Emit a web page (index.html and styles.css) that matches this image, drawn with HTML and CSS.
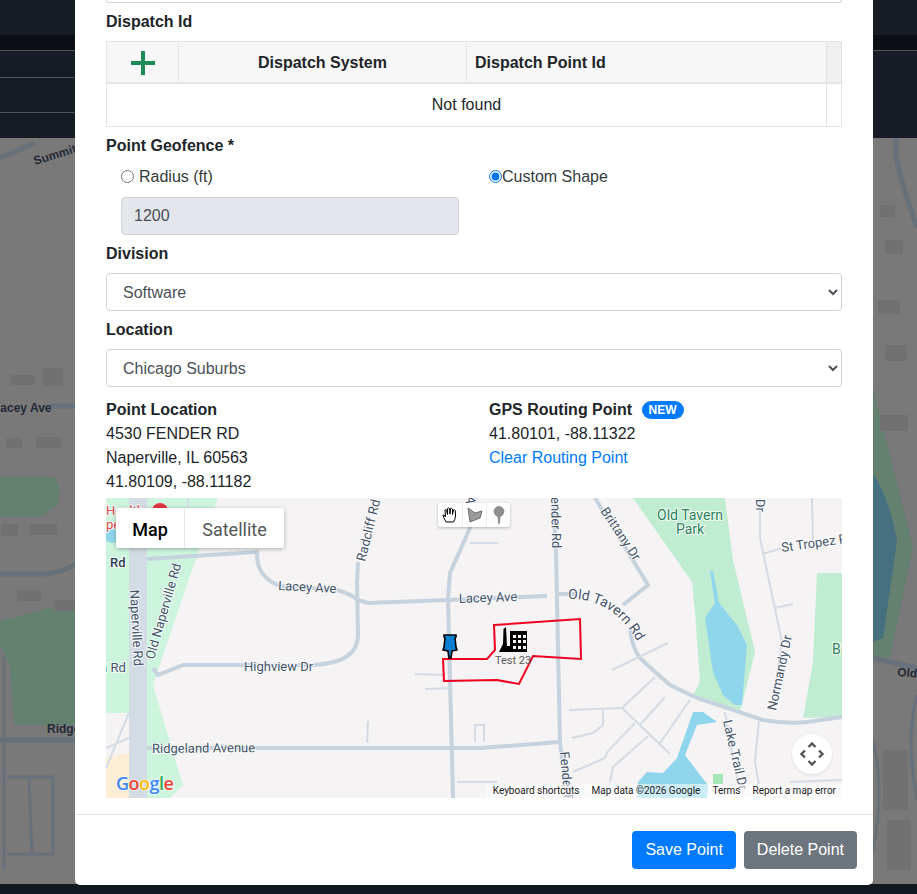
FILE: index.html
```html
<!DOCTYPE html>
<html>
<head>
    <meta charset="UTF-8">
    <title>Edit Point</title>
    <link rel="stylesheet" href="styles.css">
</head>
<body>
    <!-- page behind the modal, already dimmed -->
    <svg class="backdrop" width="917" height="894" viewBox="0 0 917 894">
        <rect width="917" height="894" fill="#7a797a"/>
        <rect width="917" height="35" fill="#171b24"/>
        <rect y="35" width="917" height="15" fill="#0c0f13"/>
        <rect y="50" width="917" height="88" fill="#161b25"/>
        <path d="M0 50.5H917M0 77.5H75M0 112.5H75" stroke="#50545b" fill="none"/>
        <rect y="884" width="917" height="10" fill="#13171f"/>
        <g fill="#64806f">
            <path d="M0 477H55Q62 490 58 505L40 517H0Z"/>
            <path d="M0 621L75 601V725H14L10 665L0 645Z"/>
            <path d="M873 388L913 547L890 658L873 655Z"/>
        </g>
        <path d="M873 473Q890 500 897 541L883 638L873 642Z" fill="#466f80"/>
        <g fill="none" stroke="#66717b" stroke-width="5">
            <path d="M0 158L35 143M50 406H75"/>
            <path d="M0 574H45Q65 572 75 564"/>
            <path d="M0 740H75"/>
            <path d="M873 658L917 668"/>
            <path d="M896 138V155Q900 180 917 228"/>
            <path d="M4 656V869M7 777H53V854H7M29 777L32 854" stroke-width="3"/>
            <path d="M873 740Q885 790 873 850M917 695Q905 740 917 800" stroke-width="3"/>
        </g>
        <g fill="#727172">
            <rect x="11" y="375" width="24" height="10"/>
            <rect x="43" y="368" width="20" height="18"/>
            <rect x="6" y="438" width="16" height="10"/>
            <rect x="36" y="437" width="25" height="11"/>
            <rect x="1" y="524" width="17" height="12"/>
            <rect x="29" y="524" width="28" height="11"/>
            <rect x="17" y="590" width="24" height="11"/>
            <rect x="54" y="600" width="21" height="11"/>
            <rect x="880" y="205" width="15" height="12"/>
            <rect x="885" y="240" width="18" height="14"/>
            <rect x="878" y="300" width="22" height="14"/>
            <rect x="885" y="345" width="22" height="16"/>
            <rect x="880" y="415" width="28" height="16"/>
            <rect x="883" y="750" width="25" height="60"/>
            <rect x="887" y="820" width="24" height="50"/>
        </g>
        <g class="bg-label">
            <text x="35" y="165" transform="rotate(-17 35 165)">Summit</text>
            <text x="-7" y="412">Lacey Ave</text>
            <text x="47" y="733">Ridgeland</text>
            <text x="897" y="676" transform="rotate(5 897 676)">Old</text>
        </g>
    </svg>

    <div class="modal">
        <div class="modal-body">
            <div class="prev-input"></div>

            <label class="field-label">Dispatch Id</label>
            <table class="dispatch-table">
                <thead>
                    <tr>
                        <th class="col-add">
                            <svg width="24" height="24" viewBox="0 0 24 24"><path d="M10 0h4v10h10v4H14v10h-4V14H0v-4h10z" fill="#1f8b58"/></svg>
                        </th>
                        <th class="col-system">Dispatch System</th>
                        <th class="col-point">Dispatch Point Id</th>
                        <th class="col-gutter"></th>
                    </tr>
                </thead>
                <tbody>
                    <tr>
                        <td colspan="3">Not found</td>
                        <td class="cell-gutter"></td>
                    </tr>
                </tbody>
            </table>

            <label class="field-label geofence-label">Point Geofence *</label>
            <div class="geofence-row">
                <div class="radius-col">
                    <label class="radio-label"><input type="radio" name="fence">Radius (ft)</label>
                    <input class="form-control" type="text" value="1200" disabled>
                </div>
                <div class="shape-col">
                    <label class="radio-label radio-tight"><input type="radio" name="fence" checked>Custom Shape</label>
                </div>
            </div>

            <label class="field-label select-label">Division</label>
            <select class="form-control">
                <option>Software</option>
            </select>

            <label class="field-label select-label">Location</label>
            <select class="form-control">
                <option>Chicago Suburbs</option>
            </select>

            <div class="location-row">
                <div>
                    <div class="strong">Point Location</div>
                    <div>4530 FENDER RD</div>
                    <div>Naperville, IL 60563</div>
                    <div>41.80109, -88.11182</div>
                </div>
                <div>
                    <div class="strong">GPS Routing Point <span class="badge">NEW</span></div>
                    <div>41.80101, -88.11322</div>
                    <a href="#">Clear Routing Point</a>
                </div>
            </div>

            <div class="map">
                <svg class="map-canvas" width="736" height="300" viewBox="0 0 736 300">
                    <rect width="736" height="300" fill="#f5f3f4"/>
                    <!-- parks and water -->
                    <g fill="#cdf5de">
                        <path d="M41 0H112L86 72L47 187L77 287L64 300H41Z"/>
                        <rect width="23" height="215"/>
                    </g>
                    <path d="M0 260L23 255V300H0Z" fill="#fbeed5"/>
                    <g fill="#c0edd1">
                        <path d="M527 0H619L627 62L649 154L634 214L587 197L594 184L589 114L586 84Z"/>
                        <path d="M711 75H736V219L697 220L707 164Z"/>
                    </g>
                    <rect x="607" y="276" width="10" height="10" fill="#a5e6b8"/>
                    <g fill="#8fd5ec">
                        <path d="M604 73H607L613 105L631 127L641 147L636 207L629 207L617 197L607 174L599 120L609 105Z"/>
                        <path d="M587 214L597 214L611 224L591 227L579 257L594 277L602 287L601 300H531L532 284L541 274L557 275L571 260Z"/>
                        <circle cx="6" cy="38" r="7"/>
                    </g>
                    <!-- roads -->
                    <rect x="23" width="18" height="300" fill="#d3dbe4"/>
                    <g class="road">
                        <path d="M41 61L151 54Q150 80 175 88L231 92Q245 96 252 102L262 105L342 102L441 98M452 96H470"/>
                        <path d="M252 64L251 84L252 137Q252 165 207 167H77L52 177L47 170"/>
                        <path d="M41 250H374L454 244"/>
                        <path d="M369 0L364 30L344 75L342 102L347 300"/>
                        <path d="M447 0L450 54L454 244L461 300"/>
                        <path d="M489 0L542 87L517 107"/>
                        <path d="M524 130Q526 150 534 160Q550 175 564 187L591 200L657 222Q680 226 701 224L736 219"/>
                    </g>
                    <g class="road-thin">
                        <path d="M0 270L23 215M0 250L23 240M309 176L339 177M319 191L345 190M262 223L261 245M82 0L79 47"/>
                        <path d="M364 45H392M351 284H391M369 244V227H378V243"/>
                        <path d="M463 212L516 210L564 256M516 210L549 179M534 227L559 199M554 245L584 202"/>
                        <path d="M497 212V227L487 235L466 240M542 238L507 269M529 225L501 254L499 260L467 274M507 269L504 284"/>
                        <path d="M506 172L562 145M684 284L736 282M654 0L654 40L676 144M657 56L676 50M706 0L707 42M669 110L687 106"/>
                        <path d="M619 214L632 287M653 222L649 264L653 287"/>
                        <path d="M666 212L676 144"/>
                    </g>
                    <!-- map labels -->
                    <g class="map-label">
                        <text x="172" y="92" transform="rotate(3 172 92)">Lacey Ave</text>
                        <text x="353" y="105" transform="rotate(-2 353 105)">Lacey Ave</text>
                        <text x="138" y="173">Highview Dr</text>
                        <text x="46" y="255" transform="rotate(-.5 46 255)">Ridgeland Avenue</text>
                        <text x="24" y="92" transform="rotate(87 24 92)">Naperville Rd</text>
                        <text x="48" y="162" transform="rotate(-74 48 162)">Old Naperville Rd</text>
                        <text x="259" y="64" transform="rotate(-76 259 64)">Radcliff Rd</text>
                        <text x="494" y="13" transform="rotate(56 494 13)">Brittany Dr</text>
                        <text x="445" y="-8" transform="rotate(89 445 -8)">Fender Rd</text>
                        <text x="454" y="254" transform="rotate(85 454 254)">Fender Rd</text>
                        <text x="676" y="54" transform="rotate(-8 676 54)">St Tropez Pl</text>
                        <text x="670" y="213" transform="rotate(-78 670 213)">Normandy Dr</text>
                        <text x="617" y="223" transform="rotate(77 617 223)">Lake Trail Dr</text>
                        <text x="650" y="1" transform="rotate(90 650 1)">Dr</text>
                        <text x="361" y="-3" transform="rotate(100 361 -3)">Ar</text>
                        <text x="4" y="69" class="label-dark">Rd</text>
                        <text x="-6" y="174">n Rd</text>
                        <text class="curved"><textPath href="#old-tavern">Old Tavern Rd</textPath></text>
                        <text x="584" y="22" text-anchor="middle" class="label-park">Old Tavern</text>
                        <text x="584" y="36" text-anchor="middle" class="label-park">Park</text>
                        <text x="726" y="156" class="label-park">Bi</text>
                        <text x="0" y="17" class="label-red">Health</text>
                        <text x="0" y="31" class="label-red">pe</text>
                    </g>
                    <defs><path id="old-tavern" d="M462 101Q505 100 530 141"/></defs>
                    <circle cx="54" cy="13" r="8" fill="#e0383e"/>
                    <!-- geofence -->
                    <path d="M388 127L474 121L475 161L427 158L413 186L391 182L338 183L337 161L381 161L389 152Z" fill="none" stroke="#f00020" stroke-width="2"/>
                    <!-- factory marker -->
                    <path d="M393 154L397 146L397.500 131L400 129L401 148L404 148V133H421V154Z" fill="#000"/>
                    <g fill="#fff">
                        <rect x="407" y="137" width="3" height="3"/><rect x="412" y="137" width="3" height="3"/><rect x="417" y="137" width="3" height="3"/>
                        <rect x="407" y="142" width="3" height="3"/><rect x="412" y="142" width="3" height="3"/><rect x="417" y="142" width="3" height="3"/>
                        <rect x="407" y="148" width="3" height="3"/><rect x="412" y="148" width="3" height="3"/><rect x="417" y="148" width="3" height="3"/>
                    </g>
                    <text x="389" y="166" class="marker-label">Test 23</text>
                    <!-- dispatch pin -->
                    <path d="M338 137H350V139L349 140L350 149L351 152L346 153L345 160H343L342 153L337 152L338 149L339 140L338 139Z" fill="#0a80d2" stroke="#000" stroke-width="1.600"/>
                    <!-- logo -->
                    <text x="10" y="292" class="g-logo"><tspan fill="#4285f4">G</tspan><tspan fill="#ea4335">o</tspan><tspan fill="#fbbc05">o</tspan><tspan fill="#4285f4">g</tspan><tspan fill="#34a853">l</tspan><tspan fill="#ea4335">e</tspan></text>
                </svg>

                <div class="map-type">
                    <div class="map-type-btn active">Map</div>
                    <div class="map-type-btn">Satellite</div>
                </div>

                <div class="draw-tools">
                    <div class="draw-btn">
                        <svg width="16" height="18" viewBox="0 0 16 18"><path d="M4 16L1 10Q.5 8.500 2 9L3.500 11L3 4Q3.500 3 4.500 4L5.500 8.500L5.500 2.500Q6.500 1.500 7.500 2.500L8 8L8.500 2.500Q9.500 1.500 10.500 3L10.500 8.500L11.500 4Q12.500 3 13.300 4.500L13.500 10Q13 14 11.500 16Z" fill="#fff" stroke="#000" stroke-width="1"/></svg>
                    </div>
                    <div class="draw-btn">
                        <svg width="16" height="16" viewBox="0 0 16 16"><path d="M1 1L8 6L15 4L13 11L3 15Z" fill="#9a9a9a" stroke="#6e6e6e"/></svg>
                    </div>
                    <div class="draw-btn">
                        <svg width="12" height="18" viewBox="0 0 12 18"><path d="M6 0.500A5 5 0 0 1 11 5.500Q11 8.500 7 11L6.500 17.500H5.500L5 11Q1 8.500 1 5.500A5 5 0 0 1 6 0.500Z" fill="#8e8e8e" stroke="#777" stroke-width=".6"/></svg>
                    </div>
                </div>

                <div class="pan-btn">
                    <svg width="24" height="24" viewBox="0 0 24 24"><path d="M8.500 5L12 1.500L15.500 5M8.500 19L12 22.500L15.500 19M5 8.500L1.500 12L5 15.500M19 8.500L22.500 12L19 15.500" fill="none" stroke="#555" stroke-width="2.400"/></svg>
                </div>

                <div class="attribution">
                    <span>Keyboard shortcuts</span>
                    <span>Map data ©2026 Google</span>
                    <span>Terms</span>
                    <span>Report a map error</span>
                </div>
            </div>
        </div>

        <div class="modal-footer">
            <button class="btn btn-primary">Save Point</button>
            <button class="btn btn-secondary">Delete Point</button>
        </div>
    </div>
</body>
</html>
```

FILE: styles.css
```css
body { margin: 0; width: 917px; height: 894px; overflow: hidden; background: #13171f; font-family: "Liberation Sans", Arial, sans-serif; font-size: 16px; line-height: 24px; color: #212529; }
.backdrop { position: absolute; left: 0; top: 0; }
.bg-label { font-family: "Liberation Sans", sans-serif; font-weight: bold; font-size: 12px; fill: #232a36; }

.modal { position: absolute; left: 75px; top: 0; width: 798px; height: 885px; background: #fff; border-radius: 0 0 5px 5px; box-sizing: border-box; }
.modal-body { height: 814px; padding: 0 31px; box-sizing: border-box; }
.prev-input { height: 2px; border: 1px solid #ced4da; border-top: none; border-radius: 0 0 4px 4px; margin-bottom: 7px; }
.field-label { display: block; font-weight: bold; margin-bottom: 7px; }
.geofence-label { margin: 7px 0 7px; }
.select-label { margin: 7px 0 7px; }

.dispatch-table { width: 736px; height: 86px; border-collapse: collapse; table-layout: fixed; border: 1px solid #e4e4e4; }
.dispatch-table th { background: #f7f7f7; border: 1px solid #e4e4e4; border-bottom-width: 2px; height: 41px; padding: 2px 8px 0; box-sizing: border-box; vertical-align: middle; }
.dispatch-table td { text-align: center; padding: 0; height: 42px; }
.col-add { width: 72px; }
.col-add svg { display: block; margin: 0 auto; }
.col-system { width: 288px; }
.col-point { width: 360px; text-align: left; }
.col-gutter { background: #efefef !important; }
.dispatch-table .cell-gutter { border-left: 1px solid #e4e4e4; width: 15px; }

.geofence-row { display: flex; padding-left: 15px; }
.radius-col { width: 338px; margin-right: 30px; }
.shape-col { flex: 1; }
.radio-label { display: flex; align-items: center; height: 24px; margin-bottom: 8px; color: #343a40; }
.radio-label input { width: 13px; height: 13px; margin: 0 5px 1px 0; }
.radio-tight input { margin-right: 0; }
.form-control { display: block; width: 100%; height: 38px; padding: 6px 12px; box-sizing: border-box; border: 1px solid #ced4da; border-radius: 4px; background: #fff; font: inherit; color: #495057; }
.form-control:disabled { background: #e3e6ea; opacity: 1; }

.location-row { display: grid; grid-template-columns: 383px 1fr; margin-top: 10px; padding-top: 1px; height: 100px; }
.strong { font-weight: bold; }
.badge { display: inline-block; margin-left: 5px; padding: 0 7px; height: 18px; line-height: 18px; border-radius: 9px; background: #007bff; color: #fff; font-size: 12px; vertical-align: 1px; }
a { color: #007bff; text-decoration: none; }

.map { position: relative; width: 736px; height: 300px; overflow: hidden; }
.map-canvas { display: block; }
.road { fill: none; stroke: #c6d2dd; stroke-width: 4; }
.road-thin { fill: none; stroke: #d3dce4; stroke-width: 2; }
.map-label { font-family: Roboto, sans-serif; font-size: 13px; font-weight: 400; fill: #44546a; stroke: #fff; stroke-width: 2px; paint-order: stroke; stroke-opacity: .8; }
.curved { font-size: 14px; }
.label-dark { fill: #2c3a4e; font-weight: 500; }
.label-park { font-size: 14px; fill: #2f7f5c; }
.label-red { fill: #e0484e; }
.marker-label { font-family: Roboto, sans-serif; font-size: 11px; fill: #5a5a5a; }
.g-logo { font-family: "Open Sans", sans-serif; font-size: 18px; font-weight: 600; stroke: #fff; stroke-width: 1.500px; paint-order: stroke; stroke-opacity: .7; letter-spacing: -.5px; }

.map-type { position: absolute; left: 10px; top: 10px; display: flex; height: 40px; background: #fff; border-radius: 2px; box-shadow: 0 1px 4px rgba(0,0,0,.3); font-family: Roboto, sans-serif; font-size: 18px; line-height: 43px; color: #565656; }
.map-type-btn { width: 99px; text-align: center; box-sizing: border-box; }
.map-type-btn.active { width: 69px; color: #000; font-weight: 500; border-right: 1px solid #e6e6e6; }

.draw-tools { position: absolute; left: 332px; top: 5px; display: flex; height: 24px; background: #fff; border-radius: 2px; box-shadow: 0 1px 3px rgba(0,0,0,.25); }
.draw-btn { width: 24px; height: 24px; display: flex; align-items: center; justify-content: center; box-sizing: border-box; }
.draw-btn + .draw-btn { border-left: 1px solid #ececec; }

.pan-btn { position: absolute; left: 686px; top: 236px; width: 40px; height: 40px; border-radius: 50%; background: #fff; display: flex; align-items: center; justify-content: center; box-shadow: 0 1px 3px rgba(0,0,0,.1); }

.attribution { position: absolute; right: 0; bottom: 0; display: flex; gap: 12px; padding: 0 6px 0 7px; height: 14px; line-height: 14px; font-family: Roboto, sans-serif; font-size: 10px; color: #222; background: rgba(255,255,255,.55); }

.modal-footer { display: flex; justify-content: flex-end; gap: 8px; padding: 16px; border-top: 1px solid #dee2e6; }
.btn { height: 38px; padding: 6px 12px; border: 1px solid transparent; border-radius: 4px; font: inherit; color: #fff; }
.btn-primary { background: #007bff; }
.btn-secondary { background: #6c757d; }
```
